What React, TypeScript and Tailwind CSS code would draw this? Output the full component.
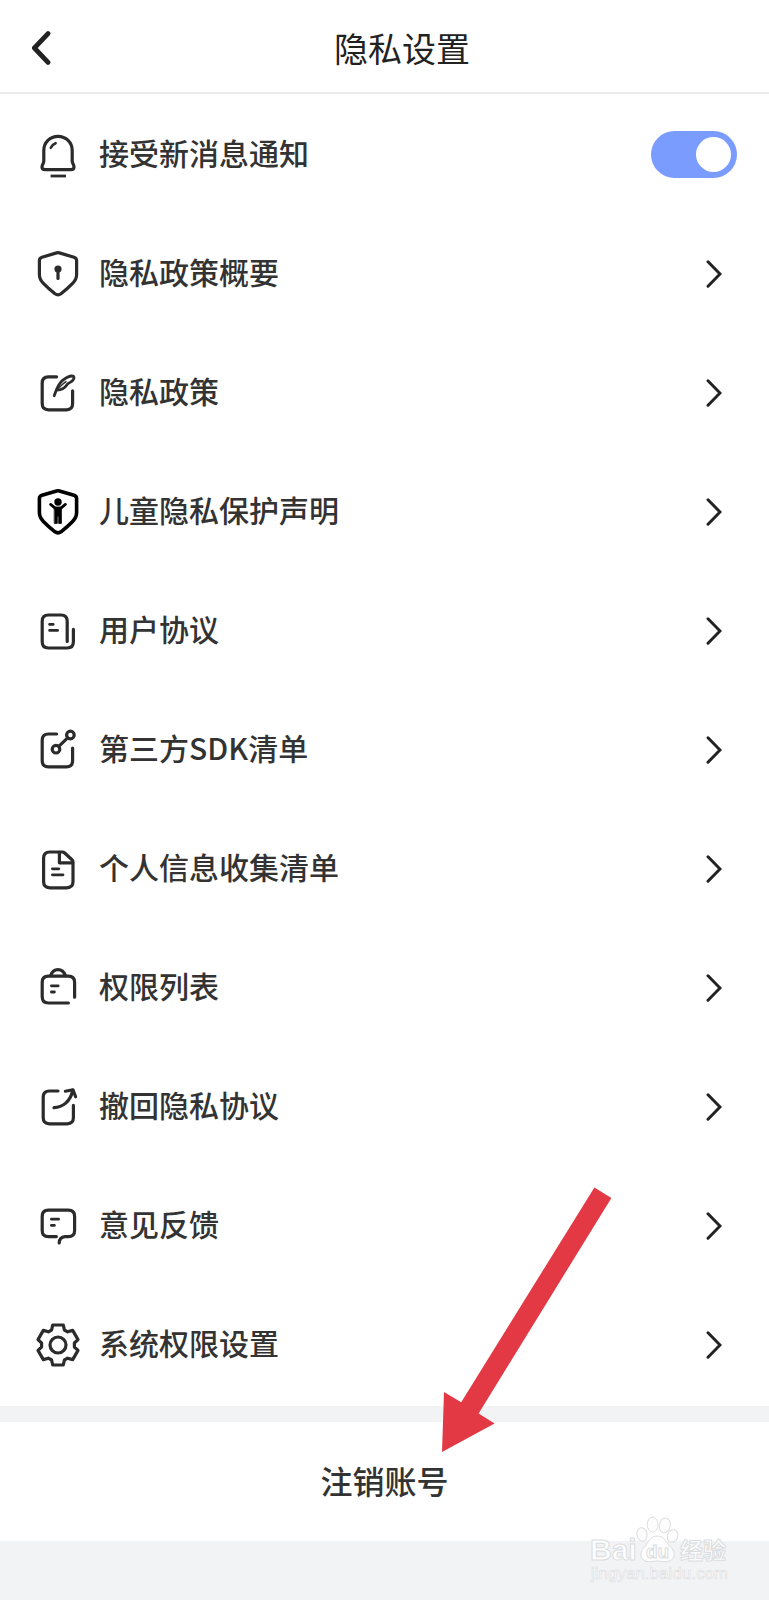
import { useState } from 'react';
import type { ReactNode } from 'react';

interface MenuItem {
  label: string;
  icon: ReactNode;
}

function LineIcon({ children, className = 'text-[#2b2b2b]' }: { children: ReactNode; className?: string }): React.JSX.Element {
  return (
    <svg
      viewBox="0 0 48 48"
      className={`h-12 w-12 shrink-0 ${className}`}
      fill="none"
      stroke="currentColor"
      strokeWidth="3.2"
      strokeLinecap="round"
      strokeLinejoin="round"
      aria-hidden="true"
    >
      {children}
    </svg>
  );
}

const shieldPath =
  'M22.6 2.9 L8 7.2 Q5.4 8 5.4 10.6 V24.5 C5.4 28 6.6 30.6 9.4 33.4 C12.5 36.6 17 40.6 21 43.8 Q24 46 27 43.8 C31 40.6 35.5 36.6 38.6 33.4 C41.4 30.6 42.6 28 42.6 24.5 V10.6 Q42.6 8 40 7.2 L25.4 2.9 Q24 2.5 22.6 2.9 Z';

const bellIcon = (
  <LineIcon>
    <path d="M24 5.4 C16 5.4 9.8 11.5 9.8 19.5 V30 C9.8 32.4 8 33.6 8 36 C8 37.8 9 38.6 11 38.6 H37 C39 38.6 40 37.8 40 36 C40 33.6 38.2 32.4 38.2 30 V19.5 C38.2 11.5 32 5.4 24 5.4 Z" />
    <path d="M16.8 16.8 C17.8 14.6 19.4 13 21.6 12.2" strokeWidth="2.6" />
    <path d="M18 45 H30.6" strokeLinecap="square" strokeWidth="2.8" />
  </LineIcon>
);

const items: MenuItem[] = [
  {
    label: '隐私政策概要',
    icon: (
      <LineIcon>
        <path d={shieldPath} />
        <circle cx="24" cy="19" r="3.6" fill="currentColor" stroke="none" />
        <path d="M24 20 V28.4" />
      </LineIcon>
    ),
  },
  {
    label: '隐私政策',
    icon: (
      <LineIcon>
        <path d="M22.6 7.8 H14.4 Q8.2 7.8 8.2 14 V34.6 Q8.2 40.8 14.4 40.8 H32.6 Q38.6 40.8 38.6 34.6 V21.8" />
        <path d="M20.2 26.8 C22 22 23.4 15.6 28.6 11.4 C31.8 8.8 35.4 7 38 7 C40.4 7 40.4 9 39.2 10.8 C37.6 13.4 34.6 13.6 33.2 15.4 C31.6 17.6 30.6 20.8 23 21.2" strokeWidth="2.8" />
        <path d="M23 21 C26 17.6 28.4 15 32 12.6" strokeWidth="1.4" />
      </LineIcon>
    ),
  },
  {
    label: '儿童隐私保护声明',
    icon: (
      <LineIcon className="text-black">
        <path d={shieldPath} strokeWidth="3.6" />
        <circle cx="24" cy="14" r="3.7" fill="currentColor" stroke="none" />
        <path d="M16.6 16.4 L21.4 20.4 H26.6 L31.4 16.4" strokeWidth="2.8" />
        <path d="M20.6 19 H27.4 V35.4 H24.7 V28.4 H23.3 V35.4 H20.6 Z" fill="currentColor" strokeWidth="0.8" />
      </LineIcon>
    ),
  },
  {
    label: '用户协议',
    icon: (
      <LineIcon>
        <path d="M33.2 34.4 V14.2 Q33.2 8 27 8 H14.4 Q8.2 8 8.2 14.2 V34.8 Q8.2 41 14.4 41 H33.2 Q39.4 41 39.4 34.8 V22.4" />
        <path d="M15.6 17.4 H19.2 M15.6 23.4 H23.6" strokeWidth="2.8" />
      </LineIcon>
    ),
  },
  {
    label: '第三方SDK清单',
    icon: (
      <LineIcon>
        <path d="M22.6 8 H14.4 Q8.2 8 8.2 14.2 V34.6 Q8.2 40.8 14.4 40.8 H32.6 Q38.6 40.8 38.6 34.6 V22" />
        <circle cx="36.4" cy="9" r="3.8" />
        <circle cx="22" cy="23.2" r="3.8" />
        <path d="M33.6 11.8 L24.8 20.4" />
      </LineIcon>
    ),
  },
  {
    label: '个人信息收集清单',
    icon: (
      <LineIcon>
        <path d="M28.6 7 H15.8 Q9.6 7 9.6 13.2 V36.6 Q9.6 42.8 15.8 42.8 H32.8 Q39 42.8 39 36.6 V17 Q39 15.6 38 14.8 L30.4 7.8 Q29.6 7 28.6 7 Z" />
        <path d="M25.4 7.4 V17.8 H38.6" />
        <path d="M18.4 23.8 H24.8 M18.4 29.8 H29" strokeWidth="2.8" />
      </LineIcon>
    ),
  },
  {
    label: '权限列表',
    icon: (
      <LineIcon>
        <path d="M34.4 39 H14.4 Q8.2 39 8.2 32.8 V18.4 Q8.2 12.2 14.4 12.2 H34.4 Q40.6 12.2 40.6 18.4 V33.2" />
        <path d="M16.6 11.6 C18 7.6 20.6 5.6 24 5.6 C27.4 5.6 30 7.6 31.4 11.6" />
        <path d="M17.4 21.8 H24.2 M17.4 28 H20.4" strokeWidth="2.8" />
      </LineIcon>
    ),
  },
  {
    label: '撤回隐私协议',
    icon: (
      <LineIcon>
        <path d="M24 8 H15.4 Q9.2 8 9.2 14.2 V34.6 Q9.2 40.8 15.4 40.8 H33.2 Q39.4 40.8 39.4 34.6 V22.4" />
        <path d="M20 24.6 C28.4 24.4 36.6 18.6 38.6 7.4" />
        <path d="M31.4 8.2 L39 6.8 L41.6 13.8" />
      </LineIcon>
    ),
  },
  {
    label: '意见反馈',
    icon: (
      <LineIcon>
        <path d="M22.4 34.6 H14.4 Q8.2 34.6 8.2 28.4 V14.4 Q8.2 8.2 14.4 8.2 H34.4 Q40.6 8.2 40.6 14.4 V28.4 Q40.6 34.6 34.4 34.6 H31 C27.6 34.8 25.4 37 25.2 41" />
        <path d="M17.4 17.2 H24.6 M17.4 23.4 H20.4" strokeWidth="2.8" />
      </LineIcon>
    ),
  },
  {
    label: '系统权限设置',
    icon: (
      <LineIcon>
        <path d="M18.7 4 H29.3 L30.4 9 L33.6 10.8 L38.7 9.4 L44 18.6 L40.4 22 V26 L44 29.4 L38.7 38.6 L33.6 37.2 L30.4 39 L29.3 44 H18.7 L17.6 39 L14.4 37.2 L9.3 38.6 L4 29.4 L7.6 26 V22 L4 18.6 L9.3 9.4 L14.4 10.8 L17.6 9 Z" />
        <circle cx="24" cy="24" r="8" />
      </LineIcon>
    ),
  },
];

function ChevronRight(): React.JSX.Element {
  return (
    <svg viewBox="0 0 16 28" className="h-7 w-4 shrink-0" fill="none" stroke="#222222" strokeWidth="3" strokeLinecap="round" aria-hidden="true">
      <path d="M2 1.8 L14 14 L2 26.2" />
    </svg>
  );
}

function Watermark(): React.JSX.Element {
  return (
    <svg
      viewBox="0 0 142 70"
      className="absolute right-[38px] bottom-[14px] h-[70px] w-[142px]"
      fill="#fdfdfd"
      stroke="#dcdddf"
      strokeWidth="1"
      aria-label="Baidu 经验"
    >
      <ellipse cx="53" cy="18.4" rx="5" ry="6.8" transform="rotate(-12 53 18.4)" />
      <ellipse cx="63.6" cy="8.6" rx="5.4" ry="7.4" />
      <ellipse cx="75.8" cy="9.4" rx="5.4" ry="7.4" transform="rotate(12 75.8 9.4)" />
      <ellipse cx="83.6" cy="20" rx="5.2" ry="6.4" transform="rotate(20 83.6 20)" />
      <path d="M68 20 C60 20 59 28 54.6 32 C50 36 50.6 45.6 60 45.8 C63 45.8 65 45 68 45 C71 45 73 45.8 76 45.8 C86 45.6 87.6 37 82.4 32 C77 27 76 20 68 20 Z" />
      <g className="font-['Liberation_Sans','Noto_Sans_CJK_SC',sans-serif] font-bold">
        <text x="1" y="44" fontSize="30">Bai</text>
        <text x="57" y="42" fontSize="19">du</text>
        <text x="91" y="43" fontSize="23">经验</text>
      </g>
      <text x="2" y="63" fontSize="17" strokeWidth="0.6" className="font-['Liberation_Sans',sans-serif]">
        jingyan.baidu.com
      </text>
    </svg>
  );
}

export default function App(): React.JSX.Element {
  const [notify, setNotify] = useState(true);

  return (
    <div className="relative min-h-screen bg-[#f2f3f5] font-['Noto_Sans_CJK_SC',sans-serif] text-[30px] font-medium text-[#333333]">
      <header className="flex h-[94px] items-center border-b-2 border-[#ebebeb] bg-white pt-1">
        <button type="button" aria-label="返回" className="-mr-4 flex h-12 w-[51px] items-center justify-end">
          <svg viewBox="0 0 20 34" className="h-[34px] w-5" fill="none" stroke="#222222" strokeWidth="4.8" strokeLinecap="round" strokeLinejoin="round" aria-hidden="true">
            <path d="M17 2.6 L3.4 17 L17 31.4" />
          </svg>
        </button>
        <h1 className="flex-1 text-center text-[34px] leading-[48px] font-normal text-[#222222]">隐私设置</h1>
      </header>

      <main>
        <ul className="bg-white pt-px pb-0.5">
          <li>
            <label className="flex h-[119px] items-center gap-[17px] pr-8 pl-[34px]">
              {bellIcon}
              <span className="flex-1 pb-1">接受新消息通知</span>
              <input
                type="checkbox"
                role="switch"
                checked={notify}
                onChange={(e) => setNotify(e.target.checked)}
                className="flex h-[47px] w-[86px] appearance-none items-center rounded-full bg-gray-300 px-1.5 before:h-[35px] before:w-[35px] before:rounded-full before:bg-white checked:justify-end checked:bg-[#7a9cff]"
              />
            </label>
          </li>
          {items.map((item) => (
            <li key={item.label}>
              <button type="button" className="flex h-[119px] w-full items-center gap-[17px] pr-[47px] pl-[34px] text-left">
                {item.icon}
                <span className="flex-1 pb-1">{item.label}</span>
                <ChevronRight />
              </button>
            </li>
          ))}
        </ul>

        <button type="button" className="mt-4 h-[119px] w-full bg-white pb-1 text-center text-[32px]">
          注销账号
        </button>
      </main>

      <footer className="relative h-[59px]">
        <Watermark />
      </footer>

      {/* pointer towards the account removal button */}
      <svg viewBox="0 0 170 266" className="pointer-events-none absolute top-[1187px] left-[442px] h-[266px] w-[170px]" fill="#e33945" aria-hidden="true">
        <path d="M152.4 0.4 L169.4 11 L36.6 226.4 L52.6 236.4 L0 265 L2 205 L19.2 215.2 Z" />
      </svg>
    </div>
  );
}
